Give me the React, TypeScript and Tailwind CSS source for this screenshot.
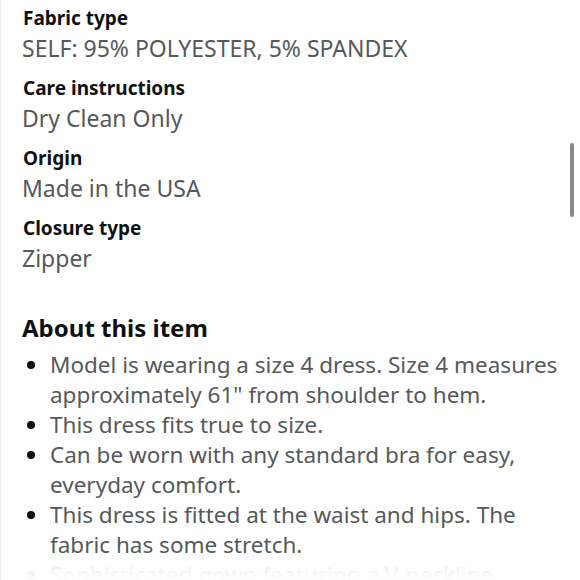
const specs = [
  { label: 'Fabric type', value: 'SELF: 95% POLYESTER, 5% SPANDEX' },
  { label: 'Care instructions', value: 'Dry Clean Only' },
  { label: 'Origin', value: 'Made in the USA' },
  { label: 'Closure type', value: 'Zipper' },
];

const bullets = [
  'Model is wearing a size 4 dress. Size 4 measures approximately 61" from shoulder to hem.',
  'This dress fits true to size.',
  'Can be worn with any standard bra for easy, everyday comfort.',
  'This dress is fitted at the waist and hips. The fabric has some stretch.',
  'Sophisticated gown featuring a V-neckline, spaghetti straps and a flowing skirt.',
];

export default function App() {
  return (
    <div className="relative h-[580px] w-[580px] overflow-hidden bg-white font-['Noto_Sans',sans-serif] border-l border-[#eeeeee]">
      <div className="pl-[21px] pr-[16px] pt-[4px]">
        <div className="flex flex-col gap-[10px]">
          {specs.map((s) => (
            <div key={s.label}>
              <div className="pl-[1px] text-[19px] font-bold leading-[28px] text-[#0f1111]">{s.label}</div>
              <div className="text-[23px] leading-[32px] text-[#565959]">{s.value}</div>
            </div>
          ))}
        </div>

        <h2 className="mt-[38px] text-[24px] font-bold leading-[32px] text-[#0f1111]">About this item</h2>
        <ul className="mt-[6px] list-disc pl-[28px] text-[22.5px] leading-[30px] text-[#565959] marker:text-[#0f1111]">
          {bullets.map((b) => (
            <li key={b}>{b}</li>
          ))}
        </ul>
      </div>

      <div className="absolute inset-x-0 bottom-0 h-[24px] bg-gradient-to-b from-white/80 to-white" />
      <div className="absolute right-[6px] top-[143px] h-[74px] w-[4px] rounded-full bg-[#8a8a8a]" />
    </div>
  );
}
